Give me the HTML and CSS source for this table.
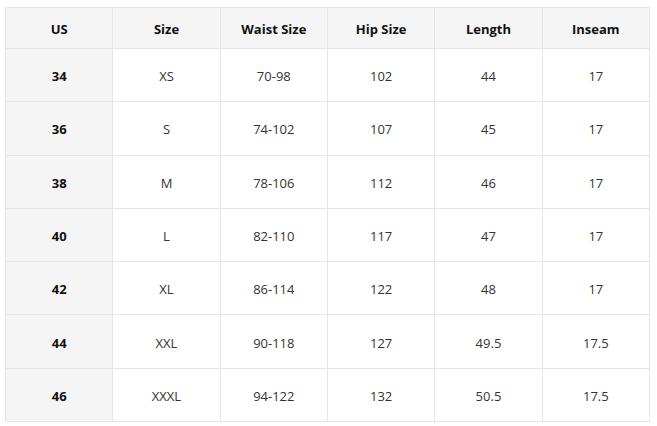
FILE: index.html
```html
<!DOCTYPE html>
<html>
<head>
<meta charset="utf-8">
<link rel="stylesheet" href="styles.css">
</head>
<body>
<table class="size-table">
  <thead>
    <tr class="head-row">
      <th>US</th><th>Size</th><th>Waist Size</th><th>Hip Size</th><th>Length</th><th>Inseam</th>
    </tr>
  </thead>
  <tbody>
    <tr><th>34</th><td>XS</td><td>70-98</td><td>102</td><td>44</td><td>17</td></tr>
    <tr><th>36</th><td>S</td><td>74-102</td><td>107</td><td>45</td><td>17</td></tr>
    <tr><th>38</th><td>M</td><td>78-106</td><td>112</td><td>46</td><td>17</td></tr>
    <tr><th>40</th><td>L</td><td>82-110</td><td>117</td><td>47</td><td>17</td></tr>
    <tr><th>42</th><td>XL</td><td>86-114</td><td>122</td><td>48</td><td>17</td></tr>
    <tr><th>44</th><td>XXL</td><td>90-118</td><td>127</td><td>49.5</td><td>17.5</td></tr>
    <tr><th>46</th><td>XXXL</td><td>94-122</td><td>132</td><td>50.5</td><td>17.5</td></tr>
  </tbody>
</table>
</body>
</html>
```
FILE: styles.css
```css
html, body {
  margin: 0;
  padding: 0;
  background: #ffffff;
}
body {
  padding: 7px 0 0 5px;
  font-family: "Open Sans", "Noto Sans", sans-serif;
  font-size: 13px;
  color: #333333;
}
.size-table {
  border-collapse: collapse;
  width: 645px;
  table-layout: fixed;
}
.size-table th,
.size-table td {
  border: 1px solid #e6e6e6;
  text-align: center;
  vertical-align: middle;
  padding: 2px 0 0 0;
}
.size-table th {
  font-weight: 700;
  color: #111111;
  background: #f5f5f5;
}
.size-table td {
  background: #ffffff;
  font-weight: 400;
}
.head-row th {
  height: 38px;
}
.size-table tbody tr {
  height: 53.3px;
}
```
